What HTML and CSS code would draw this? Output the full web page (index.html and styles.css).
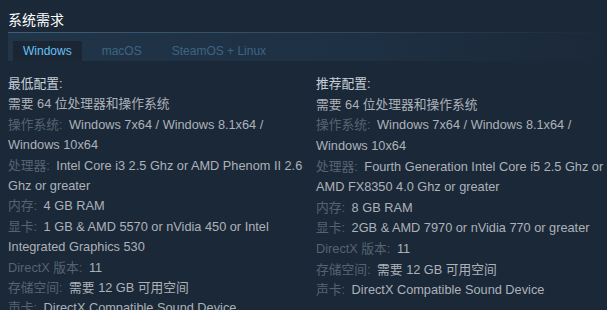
FILE: index.html
```html
<!DOCTYPE html>
<html lang="zh-CN">
  <head>
    <meta charset="UTF-8" />
    <title>系统需求</title>
    <link rel="stylesheet" href="styles.css">
  </head>
  <body>
    <div class="sysreq">
      <h2>系统需求</h2>
      <div class="tabs">
        <div class="tab active">Windows</div>
        <div class="tab">macOS</div>
        <div class="tab">SteamOS + Linux</div>
      </div>
      <div class="columns">
        <ul class="col">
          <li class="title">最低配置:</li>
          <li>需要 64 位处理器和操作系统</li>
          <li><span class="label">操作系统:</span> Windows 7x64 / Windows 8.1x64 / Windows 10x64</li>
          <li><span class="label">处理器:</span> Intel Core i3 2.5 Ghz or AMD Phenom II 2.6 Ghz or greater</li>
          <li><span class="label">内存:</span> 4 GB RAM</li>
          <li><span class="label">显卡:</span> 1 GB &amp; AMD 5570 or nVidia 450 or Intel Integrated Graphics 530</li>
          <li><span class="label">DirectX 版本:</span> 11</li>
          <li><span class="label">存储空间:</span> 需要 12 GB 可用空间</li>
          <li><span class="label">声卡:</span> DirectX Compatible Sound Device</li>
        </ul>
        <ul class="col">
          <li class="title">推荐配置:</li>
          <li>需要 64 位处理器和操作系统</li>
          <li><span class="label">操作系统:</span> Windows 7x64 / Windows 8.1x64 / Windows 10x64</li>
          <li><span class="label">处理器:</span> Fourth Generation Intel Core i5 2.5 Ghz or AMD FX8350 4.0 Ghz or greater</li>
          <li><span class="label">内存:</span> 8 GB RAM</li>
          <li><span class="label">显卡:</span> 2GB &amp; AMD 7970 or nVidia 770 or greater</li>
          <li><span class="label">DirectX 版本:</span> 11</li>
          <li><span class="label">存储空间:</span> 需要 12 GB 可用空间</li>
          <li><span class="label">声卡:</span> DirectX Compatible Sound Device</li>
        </ul>
      </div>
    </div>
  </body>
</html>
```

FILE: styles.css
```css
body {
  margin: 0;
  background-color: #1b2838;
  font-family: "Liberation Sans", Arial, "Noto Sans CJK SC", sans-serif;
  color: #acb2b8;
  overflow: hidden;
}
.sysreq {
  padding: 0 0 0 8px;
}
h2 {
  margin: 0;
  padding-top: 11px;
  height: 21px;
  font-size: 14px;
  font-weight: normal;
  color: #ffffff;
  line-height: 18px;
}
.tabs {
  display: flex;
  gap: 10px;
  height: 29px;
  padding: 8px 0 0 5px;
  box-sizing: border-box;
  border-top: 1px solid #3a5670;
  border-image: linear-gradient(to right, #3e5f78 0%, #2d4759 60%, #1b2838 100%) 1;
  background: linear-gradient(to right, #213548 0%, #1e3043 60%, #1b2838 100%);
}
.tab {
  height: 20px;
  line-height: 20px;
  padding: 0 10px;
  font-size: 12px;
  color: #3e6482;
}
.tab.active {
  background: #1a2634;
  color: #67c1f5;
}
.columns {
  display: grid;
  grid-template-columns: 296px 291px;
  gap: 12px;
  margin-top: 13px;
}
.col {
  list-style: none;
  margin: 0;
  padding: 0;
  font-size: 12.75px;
  line-height: 20.4px;
}
.col:last-child li {
  margin-bottom: 0.3px;
}
.title {
  color: #c7d0d8;
}
.label {
  color: #56646f;
  margin-right: 3px;
}
```
